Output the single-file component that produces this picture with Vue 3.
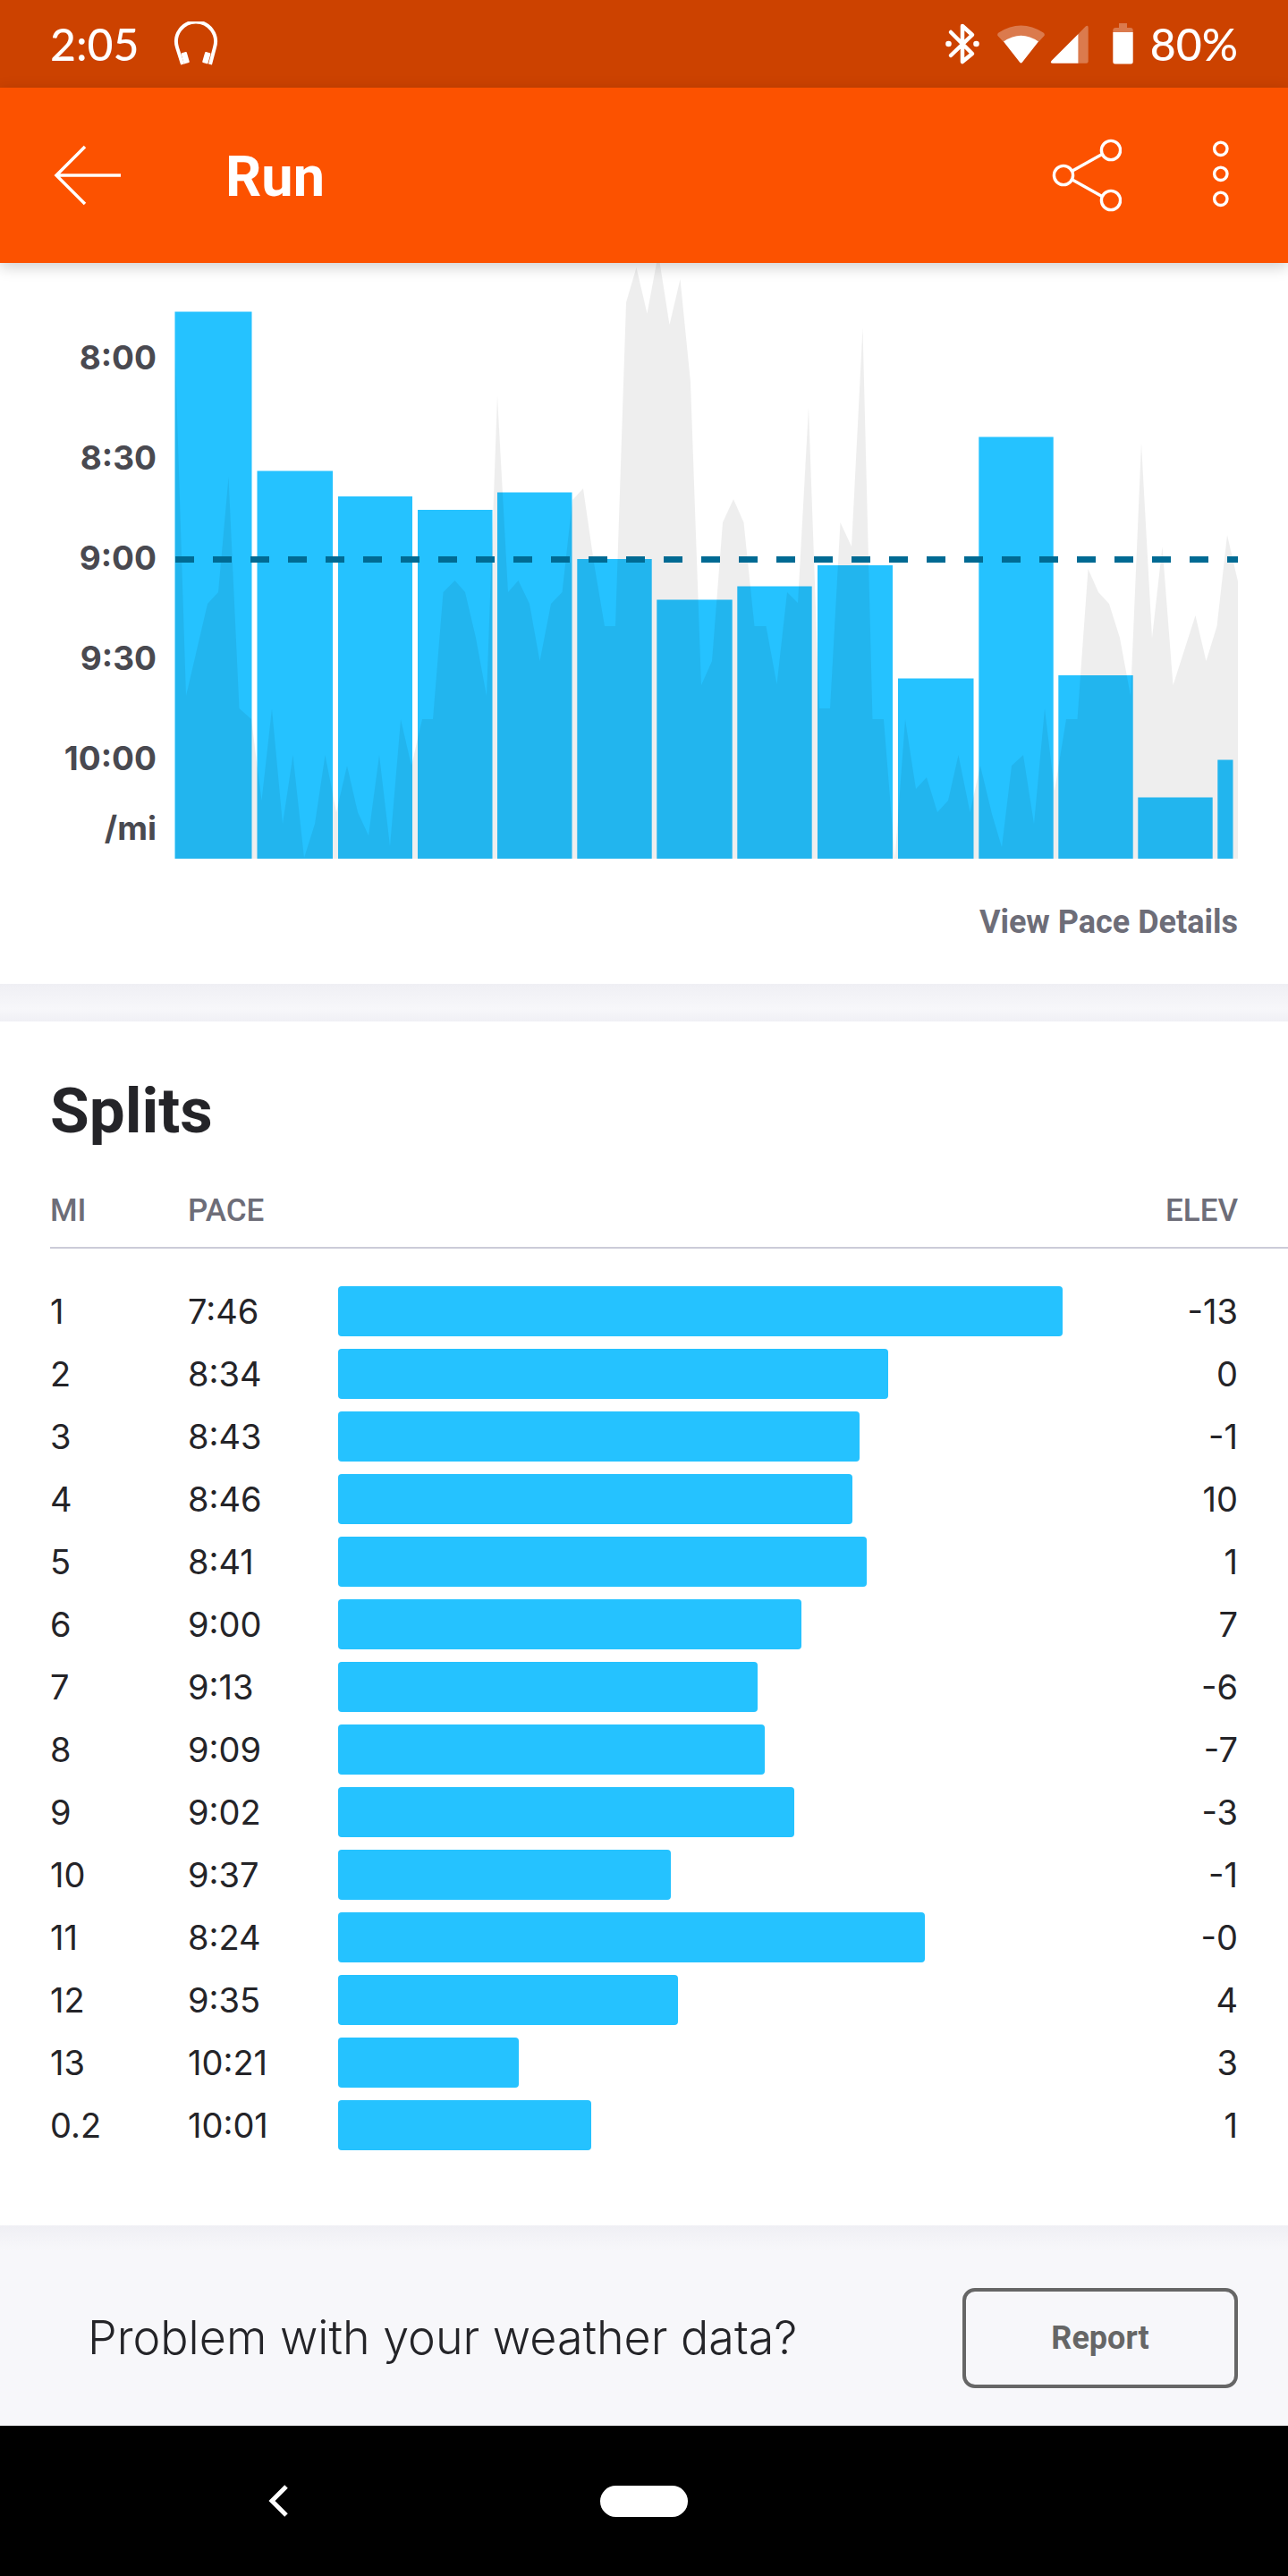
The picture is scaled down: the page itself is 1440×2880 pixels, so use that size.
<script setup>
const paceTicks = ['8:00', '8:30', '9:00', '9:30', '10:00']

// left edge, right edge and top of each mile in the pace chart
const bars = [
  [195.5, 281.5, 348.5], [287.5, 372, 526.5], [378, 461, 555], [467, 550.5, 570],
  [556, 639.5, 550.5], [645.3, 728.7, 625], [734.3, 818.7, 670.5], [824.3, 907.7, 655.5],
  [914, 998, 632], [1004, 1088.5, 758.5], [1094.3, 1177.7, 488.5], [1183.3, 1266.7, 755],
  [1272.3, 1355.7, 891.5], [1361.3, 1378.5, 849.5],
]

const elevation = [
  [196, 400], [208, 778], [232, 675], [244, 662], [255.5, 533], [267.5, 792], [281, 804],
  [292.5, 895], [304, 792], [316, 921], [327.5, 844], [340, 959], [352, 921], [363.5, 844],
  [376, 908], [388, 856], [400, 908], [412, 934], [424, 844], [436, 946], [448, 804],
  [460, 856], [472, 804], [484, 804], [495.5, 662], [508.5, 649], [520, 662], [532, 713],
  [544, 778], [556, 442], [568, 662], [579.5, 649], [592, 675], [603.5, 739], [616, 675],
  [628.5, 662], [640, 559], [652, 546], [664, 629], [676, 700], [688, 700], [700, 338],
  [711.5, 299], [723.5, 350.5], [736, 283], [748.5, 363], [760.5, 312], [772, 427],
  [784, 766], [796, 739], [808, 584], [820, 558], [831.5, 584], [843.5, 700], [856.5, 700],
  [868.5, 765], [880, 662], [892, 674], [904, 455], [916, 792], [928, 792], [939.5, 584],
  [952, 611], [964.5, 366], [975.5, 804], [988, 804], [1000.5, 960], [1012, 804],
  [1024, 882], [1036, 869], [1048, 908], [1060, 895], [1071.5, 844], [1084.5, 908],
  [1096, 856], [1109, 910], [1120, 947], [1131, 856], [1144, 844], [1156, 921],
  [1168, 792], [1179, 884], [1192, 804], [1204.5, 804], [1216.5, 636], [1228, 662],
  [1240, 675], [1252, 713], [1264, 778], [1276, 495], [1288, 713], [1299.5, 611],
  [1311.5, 766], [1324, 727], [1336.5, 688], [1348.5, 739], [1360.5, 700], [1372, 598],
  [1384, 650],
]
const area = `M196 960 L${elevation.map((p) => p.join(' ')).join(' L')} L1384 960 Z`

const longest = 810
const splits = [
  { mi: '1', pace: '7:46', bar: 810, elev: '-13' },
  { mi: '2', pace: '8:34', bar: 615, elev: '0' },
  { mi: '3', pace: '8:43', bar: 583, elev: '-1' },
  { mi: '4', pace: '8:46', bar: 575, elev: '10' },
  { mi: '5', pace: '8:41', bar: 591, elev: '1' },
  { mi: '6', pace: '9:00', bar: 518, elev: '7' },
  { mi: '7', pace: '9:13', bar: 469, elev: '-6' },
  { mi: '8', pace: '9:09', bar: 477, elev: '-7' },
  { mi: '9', pace: '9:02', bar: 510, elev: '-3' },
  { mi: '10', pace: '9:37', bar: 372, elev: '-1' },
  { mi: '11', pace: '8:24', bar: 656, elev: '-0' },
  { mi: '12', pace: '9:35', bar: 380, elev: '4' },
  { mi: '13', pace: '10:21', bar: 202, elev: '3' },
  { mi: '0.2', pace: '10:01', bar: 283, elev: '1' },
]
</script>

<template>
  <div class="screen">
    <div class="status">
      <span class="clock">2:05</span>
      <svg class="headphones" width="50" height="50" viewBox="194 24 50 50" aria-hidden="true">
        <path d="M204 72 L198 53 A22 22 0 1 1 240 53 L235 72" fill="none" stroke="#fff" stroke-width="4" />
        <rect x="204" y="58.500" width="6.500" height="12.500" rx="1" transform="rotate(-16 207 65)" fill="#fff" />
        <rect x="227.500" y="58.500" width="6.500" height="12.500" rx="1" transform="rotate(16 231 65)" fill="#fff" />
      </svg>
      <svg class="signals" width="212" height="50" viewBox="1056 24 212 50" aria-hidden="true">
        <path d="M1063 36 L1087 60 L1076 69 V29 L1087 39 L1063 62" fill="none" stroke="#fff" stroke-width="4.500" stroke-linecap="round" stroke-linejoin="round" />
        <circle cx="1060.500" cy="49" r="3.300" fill="#fff" />
        <circle cx="1091.500" cy="49" r="3.300" fill="#fff" />
        <path d="M1115.500 40 Q1114.500 38 1116.500 36.500 Q1141.500 20.500 1166.500 36.500 Q1168.500 38 1167.500 40 L1161 47 Q1141.500 33.500 1122 47 Z" fill="#db7a4d" />
        <path d="M1122 46.500 Q1141.500 33 1161 46.500 L1143 69.500 Q1141.500 71.500 1140 69.500 Z" fill="#fff" />
        <path d="M1205.500 38 L1213.500 29.700 Q1216.700 27.500 1216.700 31 V68.500 Q1216.700 70.700 1214.500 70.700 H1205.500 Z" fill="#db7a4d" />
        <path d="M1205.500 38 V70.700 H1177 Q1173.500 70.700 1175.500 68 Z" fill="#fff" />
        <path d="M1244.300 36 V34 Q1244.300 31 1247.300 31 H1251 V26 H1260 V31 H1263.700 Q1266.700 31 1266.700 34 V36 Z" fill="#db7a4d" />
        <path d="M1244.300 36 H1266.700 V69 Q1266.700 71.500 1264.200 71.500 H1246.800 Q1244.300 71.500 1244.300 69 Z" fill="#fff" />
      </svg>
      <span class="charge">80%</span>
    </div>

    <header class="appbar">
      <button class="icon" aria-label="Back">
        <svg width="76" height="70" viewBox="60 161 76 70">
          <path d="M135 196 H64 M95 164 L63 196 L95 228" fill="none" stroke="#fff" stroke-width="3.500" />
        </svg>
      </button>
      <h1>Run</h1>
      <button class="icon share" aria-label="Share">
        <svg width="78" height="84" viewBox="1176 154 78 84" fill="none" stroke="#fff" stroke-width="3.400">
          <circle cx="1189" cy="196" r="10.600" />
          <circle cx="1242" cy="168" r="10.600" />
          <circle cx="1242" cy="224" r="10.600" />
          <path d="M1199 191 L1232 172.500 M1199 201 L1232 219.500" />
        </svg>
      </button>
      <button class="icon" aria-label="More options">
        <svg width="20" height="84" viewBox="1355 154 20 84" fill="none" stroke="#fff" stroke-width="3.400">
          <circle cx="1364.800" cy="166.300" r="7.200" />
          <circle cx="1364.800" cy="194.300" r="7.200" />
          <circle cx="1364.800" cy="222.300" r="7.200" />
        </svg>
      </button>
    </header>

    <section class="pace">
      <div class="chart">
        <div class="axis">
          <span v-for="t in paceTicks" :key="t" class="tick">{{ t }}</span>
          <span class="unit">/mi</span>
        </div>
        <svg class="plot" viewBox="195 294 1189 666" preserveAspectRatio="none" role="img" aria-label="Pace per mile">
          <rect v-for="b in bars" :key="b[0]" :x="b[0]" :y="b[2]" :width="b[1] - b[0]" :height="960 - b[2]" fill="#25c2ff" />
          <path :d="area" fill="#000" fill-opacity="0.065" />
          <path d="M196 625.500 H1384" stroke="#006a93" stroke-width="7" stroke-dasharray="21 21" />
        </svg>
      </div>
      <div class="details"><a href="#">View Pace Details</a></div>
    </section>

    <div class="divider"></div>

    <section class="splits">
      <h2>Splits</h2>
      <table>
        <thead>
          <tr>
            <th class="mi" scope="col">MI</th>
            <th class="time" scope="col">PACE</th>
            <th></th>
            <th class="elev" scope="col">ELEV</th>
          </tr>
        </thead>
        <tbody>
          <tr v-for="s in splits" :key="s.mi">
            <td>{{ s.mi }}</td>
            <td>{{ s.pace }}</td>
            <td><div class="bar" :style="{ width: (s.bar / longest) * 100 + '%' }"></div></td>
            <td class="elev">{{ s.elev }}</td>
          </tr>
        </tbody>
      </table>
    </section>

    <section class="weather">
      <p>Problem with your weather data?</p>
      <button class="report">Report</button>
    </section>

    <nav class="system">
      <button class="icon back" aria-label="System back">
        <svg width="24" height="40" viewBox="0 0 24 40">
          <path d="M20 4 L4 20 L20 36" fill="none" stroke="#fff" stroke-width="5" />
        </svg>
      </button>
      <button class="home" aria-label="Home"></button>
    </nav>
  </div>
</template>

<style>
body {
  margin: 0;
  background: #fff;
}
</style>

<style scoped>
.screen {
  font-family: Inter, Roboto, sans-serif;
  color: #242428;
  background: #fff;
}
h1, h2, p {
  margin: 0;
}
button {
  padding: 0;
  border: 0;
  background: none;
  font-family: inherit;
}
svg {
  display: block;
}
.icon {
  display: block;
}
.status {
  display: flex;
  align-items: center;
  height: 98px;
  padding: 0 56px;
  background: #cc4200;
  color: #fff;
  font: 500 50px/100px Lato, Roboto, sans-serif;
}
.headphones {
  margin-left: 38px;
}
.signals {
  margin-left: auto;
}
.charge {
  margin-left: 18px;
}
.appbar {
  position: relative;
  z-index: 1;
  display: flex;
  align-items: center;
  height: 196px;
  padding: 0 65px 0 60px;
  background: #fc5200;
  box-shadow: 0 4px 16px rgba(0, 0, 0, 0.2);
}
h1 {
  margin-left: 116px;
  padding-top: 4px;
  color: #fff;
  font: 700 63px/72px Roboto, sans-serif;
}
.share {
  margin-left: auto;
  margin-right: 101px;
}
.chart {
  display: flex;
  padding-right: 56px;
}
.axis {
  display: flex;
  flex-direction: column;
  box-sizing: border-box;
  width: 175px;
  padding-top: 50px;
  margin-right: 20px;
  text-align: right;
  color: #494950;
  font-size: 37px;
  font-weight: 700;
}
.tick {
  line-height: 112px;
}
.unit {
  line-height: 44px;
}
.plot {
  flex: 1;
  min-width: 0;
  height: 666px;
}
.details {
  height: 140px;
  padding: 0 56px;
  text-align: right;
  font: 700 36px/142px Roboto, sans-serif;
}
.details a {
  color: #6d6d78;
  text-decoration: none;
}
.divider {
  height: 42px;
  background: linear-gradient(#efeff4, #f7f7fa 28px, #f0f0f5);
}
.splits {
  padding: 60px 0 77px 56px;
}
h2 {
  font: 700 71px/80px Roboto, sans-serif;
}
table {
  width: 100%;
  margin-top: 37px;
  border-collapse: collapse;
  table-layout: fixed;
}
th {
  height: 70px;
  padding: 0 0 5px;
  border-bottom: 2px solid #cbcbd8;
  color: #6d6d78;
  text-align: left;
  font: 500 35px/70px Roboto, sans-serif;
}
tbody::before {
  content: "";
  display: block;
  height: 35px;
}
td {
  height: 70px;
  padding: 0;
  font-size: 38px;
  font-weight: 400;
  line-height: 56px;
}
.mi {
  width: 154px;
}
.time {
  width: 168px;
}
.elev {
  width: 196px;
  padding-right: 56px;
  text-align: right;
}
.bar {
  height: 56px;
  border-radius: 4px;
  background: #25c2ff;
}
.weather {
  display: flex;
  align-items: center;
  justify-content: space-between;
  padding: 70px 56px 42px 98px;
  background: linear-gradient(#efeff4, #f7f7fa 28px);
}
.weather p {
  font-size: 52px;
  font-weight: 300;
  line-height: 64px;
}
.report {
  width: 308px;
  height: 112px;
  border: 4px solid #666;
  border-radius: 14px;
  color: #666;
  font: 700 36px/48px Roboto, sans-serif;
}
.system {
  display: grid;
  grid-template-columns: 1fr 98px 1fr;
  align-items: center;
  justify-items: center;
  height: 168px;
  background: #000;
}
.back {
  margin-right: 48px;
}
.home {
  width: 98px;
  height: 35px;
  border-radius: 18px;
  background: #fff;
}
</style>
